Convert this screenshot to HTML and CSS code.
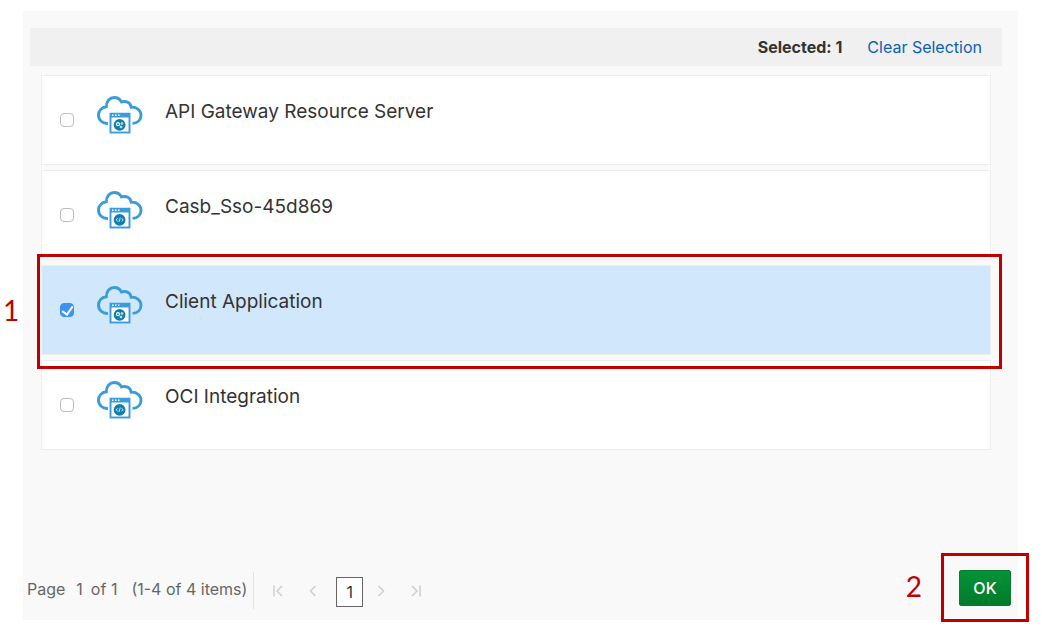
FILE: index.html
```html
<!DOCTYPE html>
<html lang="en">
<head>
<meta charset="utf-8">
<title>Select Applications</title>
<link rel="stylesheet" href="styles.css">
</head>
<body>
<svg class="defs" aria-hidden="true">
  <symbol id="cloud-window" viewBox="0 0 46 38">
    <path d="M11 27.400C5.500 27.800 1.500 24 1.500 19C1.500 14.500 4.800 11.300 9.300 10.700C9.300 5.200 12.800 1.500 17.300 1.500C20.600 1.500 23 3.200 24.500 6C29 4.300 33.500 6.800 34.200 11.200C39.800 10.800 44 14.500 44 19.300C44 24 40.500 27.200 35.500 27.400" fill="none" stroke="#3b9cdb" stroke-width="2.900"/>
    <rect x="13.500" y="17.700" width="19" height="18.800" fill="#fff" stroke="#3b9cdb" stroke-width="1.900"/>
    <path d="M13 17h20v4.500H13z" fill="#3b9cdb"/>
    <path d="M15 18.500h1.500v1.500H15zM18 18.500h1.500v1.500H18zM21 18.500h1.500v1.500H21z" fill="#fff"/>
    <circle cx="22.600" cy="28.800" r="5.900" fill="#0f7fb0"/>
  </symbol>
  <symbol id="app-gears" viewBox="0 0 46 38">
    <use href="#cloud-window"/>
    <circle cx="21" cy="28.200" r="1.500" fill="none" stroke="#fff" stroke-width="1.200"/>
    <circle cx="25" cy="27.500" r=".9" fill="none" stroke="#fff" stroke-width=".9"/>
    <circle cx="24" cy="31" r=".9" fill="none" stroke="#fff" stroke-width=".9"/>
  </symbol>
  <symbol id="app-code" viewBox="0 0 46 38">
    <use href="#cloud-window"/>
    <path d="M20.700 27.400l-1.700 1.400 1.700 1.400M24.500 27.400l1.700 1.400-1.700 1.400M23.300 26.600l-1.400 4.400" fill="none" stroke="#fff" stroke-width=".8"/>
  </symbol>
</svg>

<main class="panel">
  <header class="toolbar">
    <strong class="selected-count">Selected: 1</strong>
    <a class="clear-link" href="#clear">Clear Selection</a>
  </header>

  <ul class="app-list">
    <li class="app-row">
      <input class="app-check" type="checkbox" id="app-1">
      <svg class="app-icon" aria-hidden="true"><use href="#app-gears"/></svg>
      <label class="app-name" for="app-1">API Gateway Resource Server</label>
    </li>
    <li class="app-row">
      <input class="app-check" type="checkbox" id="app-2">
      <svg class="app-icon" aria-hidden="true"><use href="#app-code"/></svg>
      <label class="app-name" for="app-2">Casb_Sso-45d869</label>
    </li>
    <li class="app-row app-row-selected">
      <input class="app-check" type="checkbox" id="app-3" checked>
      <svg class="app-icon" aria-hidden="true"><use href="#app-gears"/></svg>
      <label class="app-name" for="app-3">Client Application</label>
      <span class="callout callout-row"></span>
      <span class="step step-row">1</span>
    </li>
    <li class="app-row">
      <input class="app-check" type="checkbox" id="app-4">
      <svg class="app-icon" aria-hidden="true"><use href="#app-code"/></svg>
      <label class="app-name" for="app-4">OCI Integration</label>
    </li>
  </ul>

  <footer class="footer">
    <div class="page-info">
      <span>Page</span>
      <span class="page-number">1</span>
      <span>of 1</span>
      <span class="page-range">(1-4 of 4 items)</span>
    </div>
    <nav class="pager" aria-label="Pages">
      <button class="page-button" type="button" aria-label="First page" disabled>
        <svg class="page-icon" viewBox="0 0 12 12"><path d="M2 .5v11M10 1L5 6l5 5"/></svg>
      </button>
      <button class="page-button" type="button" aria-label="Previous page" disabled>
        <svg class="page-icon" viewBox="0 0 12 12"><path d="M8.500 1L3.500 6l5 5"/></svg>
      </button>
      <button class="page-current" type="button" aria-current="page">1</button>
      <button class="page-button" type="button" aria-label="Next page" disabled>
        <svg class="page-icon" viewBox="0 0 12 12"><path d="M3.500 1l5 5-5 5"/></svg>
      </button>
      <button class="page-button" type="button" aria-label="Last page" disabled>
        <svg class="page-icon" viewBox="0 0 12 12"><path d="M10 .5v11M2 1l5 5-5 5"/></svg>
      </button>
    </nav>
    <div class="actions">
      <button class="ok-button" type="button">OK</button>
      <span class="callout callout-ok"></span>
      <span class="step step-ok">2</span>
    </div>
  </footer>
</main>
</body>
</html>
```

FILE: styles.css
```css
* {
  box-sizing: border-box;
}

body {
  margin: 0;
  padding: 11px 26px 20px 23px;
  min-height: 100vh;
  display: flex;
  background: #fff;
  color: #333;
  font-family: Inter, "Liberation Sans", sans-serif;
  font-size: 16px;
}

.defs {
  position: absolute;
  width: 0;
  height: 0;
}

.panel {
  flex: 1;
  display: flex;
  flex-direction: column;
  padding-top: 17px;
  background: #f9f9f9;
}

.toolbar {
  display: flex;
  align-items: center;
  justify-content: flex-end;
  gap: 25px;
  margin: 0 16px 0 7px;
  padding: 9px 20px;
  background: #f0f0f0;
  line-height: 20px;
}

.selected-count {
  font-weight: 700;
}

.clear-link {
  color: #0a62b5;
  text-decoration: none;
}

.app-list {
  display: flex;
  flex-direction: column;
  gap: 5px;
  margin: 0;
  padding: 9px 27px 0 18px;
  list-style: none;
}

.app-row {
  position: relative;
  display: flex;
  align-items: flex-start;
  height: 90px;
  padding: 20px 18px;
  border: 1px solid #ededed;
  background: #fff;
}

.app-row-selected {
  background: #d0e7fc;
  z-index: 1;
}

.app-check {
  appearance: none;
  flex: none;
  width: 14px;
  height: 14px;
  margin: 17px 23px 0 0;
  border: 1px solid #bcbcbc;
  border-radius: 4px;
  background: #fff;
}

.app-check:checked {
  border-color: #3b93f7;
  background: #3b93f7;
  display: grid;
  place-items: center;
}

.app-check:checked::before {
  content: "";
  width: 5px;
  height: 9px;
  border: solid #fff;
  border-width: 0 2px 2px 0;
  transform: translateY(-1px) rotate(35deg);
}

.app-icon {
  flex: none;
  width: 46px;
  height: 38px;
  margin-right: 22px;
}

.app-name {
  padding-top: 4px;
  font-size: 19px;
  line-height: 24px;
}

.footer {
  display: flex;
  align-items: flex-end;
  margin-top: auto;
  padding: 0 7px 11px 4px;
}

.page-info {
  display: flex;
  padding: 0 6px 2px 0;
  border-right: 1px solid #dfe4e7;
  color: #666;
  line-height: 35px;
}

.page-number {
  margin: 0 8px 0 11px;
}

.page-range {
  margin-left: 14px;
}

.pager {
  display: flex;
  align-items: center;
  gap: 11px;
  margin: 0 0 2px 12px;
}

.page-button {
  display: flex;
  padding: 5px 6px 7px;
  border: 0;
  background: none;
}

.page-icon {
  width: 12px;
  height: 12px;
  fill: none;
  stroke: #cdcfd0;
  stroke-width: 1.500;
}

.page-current {
  width: 27px;
  height: 30px;
  margin-right: -5px;
  padding: 0;
  border: 1px solid #666;
  background: #fff;
  color: #333;
  font: inherit;
}

.actions {
  position: relative;
  margin: 0 0 3px auto;
}

.ok-button {
  display: block;
  width: 52px;
  height: 36px;
  padding: 0;
  border: 1px solid #0b7a2c;
  border-radius: 2px;
  background: linear-gradient(#059239, #017a2b);
  color: #fff;
  font: inherit;
  font-weight: 500;
}

.callout {
  position: absolute;
  border: 3px solid #c00000;
  pointer-events: none;
}

.callout-row {
  inset: -12px -12px -15px -5px;
}

.callout-ok {
  inset: -17px -18px -16px;
}

.step {
  position: absolute;
  color: #c00000;
  font-family: Lato, sans-serif;
  font-size: 28px;
  line-height: 32px;
}

.step-row {
  top: 28px;
  left: -39px;
}

.step-ok {
  top: 0;
  right: 89px;
}
```
